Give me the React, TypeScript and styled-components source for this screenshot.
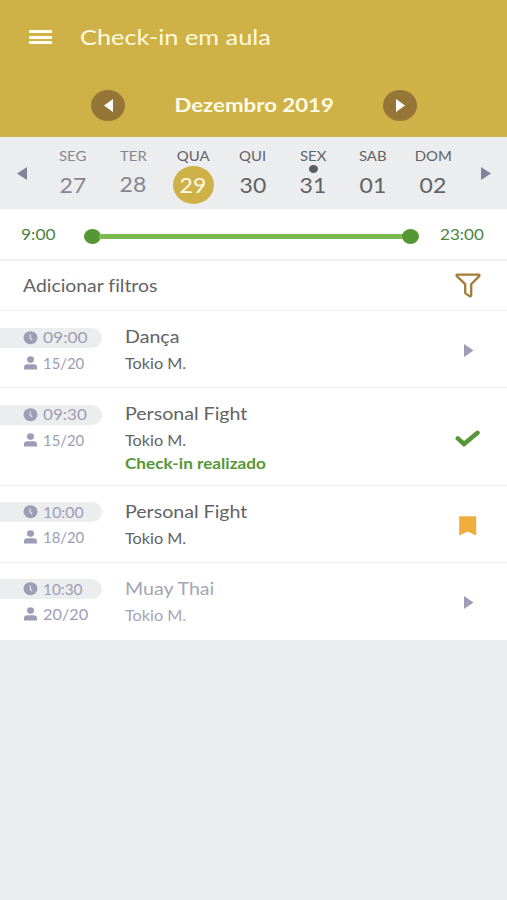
import React from 'react';
import styled, { createGlobalStyle } from 'styled-components';

const c = {
  gold: '#cfb247',
  brown: '#957637',
  strip: '#ebedef',
  text: '#626365',
  muted: '#85868f',
  faded: '#a5a5b6',
  lavender: '#9d9db6',
  green: '#569735',
  track: '#7aba4e',
  time: '#4c8540',
  line: '#f1f2f3',
};

const Global = createGlobalStyle`
  * { box-sizing: border-box; }
  html, body { margin: 0; background: ${c.strip}; }
  body { font-family: Lato, "Open Sans", sans-serif; font-variant-ligatures: none; }
`;

const Screen = styled.main`
  width: 507px;
  height: 900px;
  overflow: hidden;
  background: ${c.strip};
`;

type LabelProps = { $size: number; $stretch?: number; $color?: string; $weight?: number; $line?: number; $center?: boolean };
const Label = styled.span<LabelProps>`
  display: block;
  white-space: nowrap;
  font-size: ${p => p.$size}px;
  line-height: ${p => p.$line ?? 20}px;
  font-weight: ${p => p.$weight ?? 400};
  color: ${p => p.$color ?? c.text};
  transform: scaleX(${p => p.$stretch ?? 1.12});
  transform-origin: ${p => (p.$center ? 'center' : 'left')};
`;

const Header = styled.header`
  height: 137px;
  background: ${c.gold};
`;

const TitleBar = styled.div`
  display: flex;
  align-items: center;
  gap: 28px;
  height: 74px;
  padding-left: 29px;
`;

const MenuButton = styled.button`
  display: flex;
  flex-direction: column;
  justify-content: space-between;
  width: 23px;
  height: 14px;
  padding: 0;
  border: 0;
  background: none;
`;

const MenuLine = styled.span`
  height: 3px;
  background: #fffdf0;
`;

const MonthBar = styled.div`
  display: grid;
  grid-template-columns: 34px 1fr 34px;
  align-items: center;
  justify-items: center;
  width: 326px;
  height: 62px;
  margin-left: 91px;
`;

const MonthButton = styled.button`
  display: grid;
  place-items: center;
  width: 34px;
  height: 31px;
  padding: 0;
  border: 0;
  border-radius: 50%;
  background: ${c.brown};
`;

const Week = styled.nav`
  display: grid;
  grid-template-columns: 43px repeat(7, 60px) 44px;
  height: 72px;
`;

const WeekArrow = styled.button<{ $end?: boolean }>`
  display: flex;
  justify-content: ${p => (p.$end ? 'flex-end' : 'flex-start')};
  align-items: center;
  padding: 0 16px 0 17px;
  border: 0;
  background: none;
`;

const Day = styled.div`
  display: flex;
  flex-direction: column;
  align-items: center;
  padding-top: 9px;
`;

const DayNumber = styled.div<{ $selected?: boolean; $raised?: boolean }>`
  position: relative;
  display: grid;
  place-items: center;
  width: 41px;
  height: 38px;
  margin-top: ${p => (p.$raised ? -1 : 0)}px;
  border-radius: 50%;
  background: ${p => (p.$selected ? c.gold : 'transparent')};
`;

const Dot = styled.i`
  position: absolute;
  top: -1px;
  left: 16px;
  width: 9px;
  height: 8px;
  border-radius: 50%;
  background: #5b5c60;
`;

const Panel = styled.section`
  background: #fff;
`;

const TimeRange = styled.div`
  display: grid;
  grid-template-columns: 63px 335px auto;
  align-items: center;
  height: 52px;
  padding-left: 21px;
  border-bottom: 2px solid ${c.line};
`;

const Slider = styled.div`
  display: flex;
  align-items: center;
  width: 335px;
  padding-top: 4px;
`;

const Thumb = styled.span`
  width: 17px;
  height: 15px;
  border-radius: 50%;
  background: ${c.green};
`;

const Track = styled.span`
  flex: 1;
  height: 5px;
  margin: 0 -2px;
  background: ${c.track};
`;

const EndTime = styled.div`
  padding-left: 21px;
`;

const Filters = styled.div`
  display: flex;
  align-items: center;
  justify-content: space-between;
  height: 50px;
  padding: 0 26px 0 23px;
  border-bottom: 1px solid ${c.line};
`;

const ClassRow = styled.article<{ $height: number; $top: number }>`
  display: grid;
  grid-template-columns: 125px 1fr 78px;
  height: ${p => p.$height}px;
  padding-top: ${p => p.$top}px;
  border-bottom: 1px solid ${c.line};
  &:last-child { border-bottom: 0; }
`;

const Pill = styled.div`
  display: flex;
  align-items: flex-start;
  gap: 5px;
  width: 102px;
  height: 20px;
  padding-left: 23px;
  border-radius: 0 11px 11px 0;
  background: ${c.strip};

  svg { margin-top: 3px; }
`;

const Capacity = styled.div`
  display: flex;
  align-items: center;
  gap: 5px;
  height: 20px;
  margin-top: 5px;
  padding-left: 23px;
`;

const Details = styled.div`
  margin-top: -2px;
`;

const Teacher = styled.div<{ $gap: number }>`
  margin-top: ${p => p.$gap}px;
`;

const Status = styled.div<{ $offset: number }>`
  display: flex;
  justify-content: center;
  align-items: flex-start;
  padding-top: ${p => p.$offset}px;
`;

const Triangle = ({ color, left = false, width = 10, height = 13 }: { color: string; left?: boolean; width?: number; height?: number }) => (
  <svg width={width} height={height} viewBox="0 0 10 13" preserveAspectRatio="none">
    <path d={left ? 'M10 0V13L0 6.5Z' : 'M0 0V13L10 6.5Z'} fill={color} />
  </svg>
);

const RowArrow = () => (
  <svg width="12" height="13" viewBox="0 0 12 13">
    <path d="M2 0V13L11.5 6.5Z" fill={c.lavender} />
  </svg>
);

const ClockIcon = () => (
  <svg width="15" height="14" viewBox="0 0 15 14">
    <ellipse cx="7.5" cy="6.7" rx="7" ry="6.5" fill={c.lavender} />
    <path d="M7.2 3.3V7L9.2 9" fill="none" stroke="#e2e3eb" strokeWidth="1.2" />
  </svg>
);

const PersonIcon = () => (
  <svg width="15" height="14" viewBox="0 0 15 14">
    <ellipse cx="7.5" cy="3.6" rx="3.5" ry="3.3" fill={c.lavender} />
    <path d="M1 13V11.2Q1 8.2 4.4 8.2H10.6Q14 8.2 14 11.2V13Q14 13.5 13.4 13.5H1.6Q1 13.5 1 13Z" fill={c.lavender} />
  </svg>
);

const FunnelIcon = () => (
  <svg width="26" height="25" viewBox="0 0 26 25">
    <path
      d="M2.2 1.7H23.8Q25 2 24.2 3.1L16.2 11.2V22.2Q16 23.7 14.6 23.1L10.7 20.6Q10.2 20.2 10.2 19.5V11.2L1.8 3.1Q1 2 2.2 1.7Z"
      fill="none" stroke="#a57c37" strokeWidth="2.3" strokeLinejoin="round"
    />
  </svg>
);

const CheckIcon = () => (
  <svg width="26" height="18" viewBox="0 0 26 18">
    <path d="M2.8 8.4L9 14L22.5 2.8" fill="none" stroke={c.green} strokeWidth="4.5" strokeLinecap="round" strokeLinejoin="miter" />
  </svg>
);

const BookmarkIcon = () => (
  <svg width="18" height="20" viewBox="0 0 18 20">
    <path d="M0.2 1.2Q0.2 0.3 1.2 0.3H16.2Q17.2 0.3 17.2 1.2V19.5L8.7 15.5L0.2 19.5Z" fill="#efad3b" />
  </svg>
);

const days = [
  { name: 'SEG', date: '27', past: true },
  { name: 'TER', date: '28', past: true, raised: true },
  { name: 'QUA', date: '29', selected: true },
  { name: 'QUI', date: '30' },
  { name: 'SEX', date: '31', marked: true },
  { name: 'SAB', date: '01' },
  { name: 'DOM', date: '02' },
];

type State = 'open' | 'done' | 'saved' | 'full';
type ClassItem = {
  time: string; seats: string; name: string; state: State;
  height: number; top: number; offset: number;
  nameLine: number; gap: number; timeLine: number; timeStretch: number; seatStretch: number;
};
const classes: ClassItem[] = [
  { time: '09:00', seats: '15/20', name: 'Dança', state: 'open', height: 77, top: 17, offset: 16, nameLine: 21, gap: 6, timeLine: 18, timeStretch: 1.12, seatStretch: 0.96 },
  { time: '09:30', seats: '15/20', name: 'Personal Fight', state: 'done', height: 98, top: 17, offset: 25, nameLine: 21, gap: 6, timeLine: 18, timeStretch: 1.1, seatStretch: 0.96 },
  { time: '10:00', seats: '18/20', name: 'Personal Fight', state: 'saved', height: 77, top: 16, offset: 14, nameLine: 23, gap: 5, timeLine: 20, timeStretch: 1.02, seatStretch: 0.96 },
  { time: '10:30', seats: '20/20', name: 'Muay Thai', state: 'full', height: 77, top: 16, offset: 17, nameLine: 23, gap: 5, timeLine: 20, timeStretch: 0.99, seatStretch: 1.05 },
];

const StatusIcon = ({ state }: { state: State }) => {
  if (state === 'done') return <CheckIcon />;
  if (state === 'saved') return <BookmarkIcon />;
  return <RowArrow />;
};

export default function App() {
  return (
    <>
      <Global />
      <Screen>
        <Header>
          <TitleBar>
            <MenuButton aria-label="Menu"><MenuLine /><MenuLine /><MenuLine /></MenuButton>
            <Label as="h1" $size={21.5} $line={26} $color="#fff9df" $stretch={1.178}>Check-in em aula</Label>
          </TitleBar>
          <MonthBar>
            <MonthButton aria-label="Mês anterior"><Triangle left color="#fff" width={9} /></MonthButton>
            <Label $size={19} $line={24} $weight={700} $color="#fffbe9" $stretch={1.17} $center>Dezembro 2019</Label>
            <MonthButton aria-label="Próximo mês"><Triangle color="#fff" width={9} /></MonthButton>
          </MonthBar>
        </Header>
        <Week>
          <WeekArrow aria-label="Semana anterior"><Triangle left color="#81829b" /></WeekArrow>
          {days.map(d => (
            <Day key={d.name}>
              <Label $size={13.8} $stretch={1.08} $color={d.past ? c.muted : c.text} $center>{d.name}</Label>
              <DayNumber $selected={d.selected} $raised={d.raised}>
                {d.marked && <Dot />}
                <Label $size={20.5} $line={24} $color={d.selected ? '#fffbe9' : d.past ? c.muted : c.text} $center>{d.date}</Label>
              </DayNumber>
            </Day>
          ))}
          <WeekArrow $end aria-label="Próxima semana"><Triangle color="#81829b" /></WeekArrow>
        </Week>
        <Panel>
          <TimeRange>
            <Label $size={15.5} $color={c.time}>9:00</Label>
            <Slider><Thumb /><Track /><Thumb /></Slider>
            <EndTime><Label $size={15.5} $stretch={1.1} $color={c.time}>23:00</Label></EndTime>
          </TimeRange>
          <Filters>
            <Label $size={17} $stretch={1.14}>Adicionar filtros</Label>
            <FunnelIcon />
          </Filters>
          {classes.map(k => (
            <ClassRow key={k.time} $height={k.height} $top={k.top}>
              <div>
                <Pill>
                  <ClockIcon />
                  <Label $size={15.5} $line={k.timeLine} $stretch={k.timeStretch} $color={c.lavender}>{k.time}</Label>
                </Pill>
                <Capacity>
                  <PersonIcon />
                  <Label $size={15.5} $stretch={k.seatStretch} $color={c.lavender}>{k.seats}</Label>
                </Capacity>
              </div>
              <Details>
                <Label $size={17.5} $line={k.nameLine} $color={k.state === 'full' ? c.faded : c.text}>{k.name}</Label>
                <Teacher $gap={k.gap}><Label $size={15} $stretch={1.08} $color={k.state === 'full' ? c.faded : c.text}>Tokio M.</Label></Teacher>
                {k.state === 'done' && <Label $size={14.7} $weight={700} $stretch={1.17} $color={c.green} $line={27}>Check-in realizado</Label>}
              </Details>
              <Status $offset={k.offset}><StatusIcon state={k.state} /></Status>
            </ClassRow>
          ))}
        </Panel>
      </Screen>
    </>
  );
}
